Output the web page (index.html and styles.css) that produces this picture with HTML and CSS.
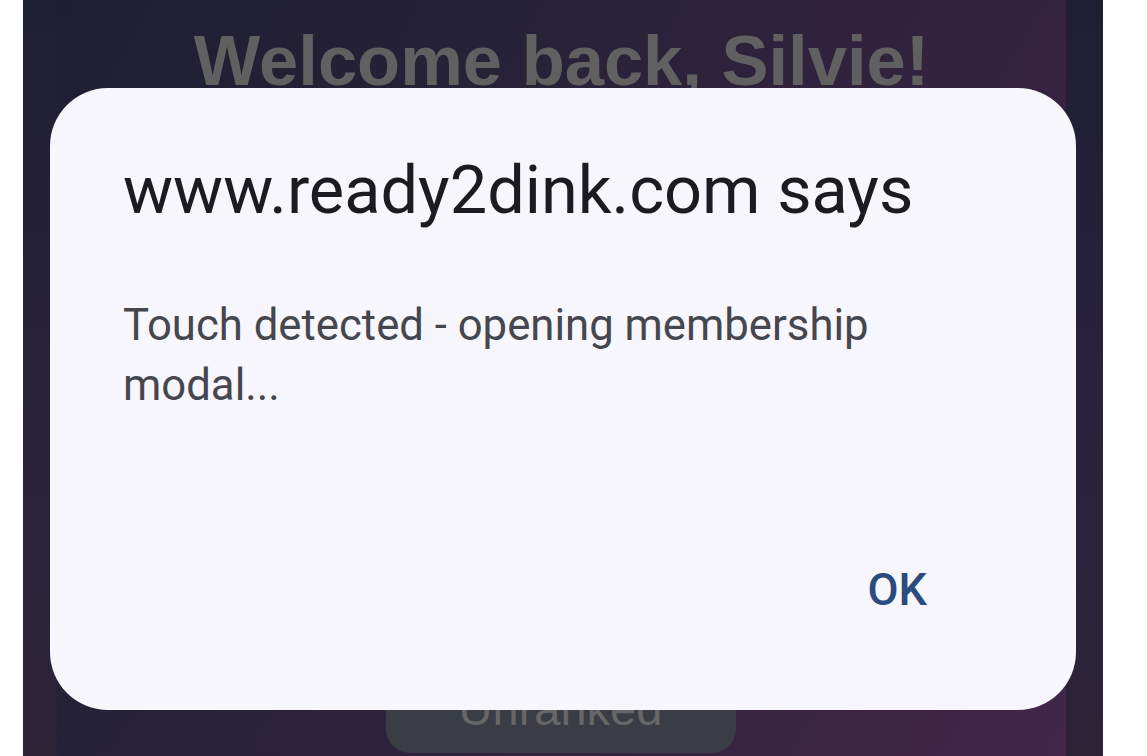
FILE: index.html
```html
<!DOCTYPE html>
<html lang="en">
<head>
<meta charset="utf-8">
<title>ready2dink</title>
<link rel="stylesheet" href="styles.css">
</head>
<body>
<div class="frame">
  <main class="page">
    <h1 class="welcome">Welcome back, Silvie!</h1>
    <div class="spacer"></div>
    <button class="rank-btn" type="button">Unranked</button>
  </main>
  <div class="dialog" role="alertdialog">
    <h2 class="dialog-title">www.ready2dink.com says</h2>
    <p class="dialog-msg">Touch detected - opening membership modal...</p>
    <div class="dialog-actions">
      <button class="ok-btn" type="button">OK</button>
    </div>
  </div>
</div>
</body>
</html>
```
FILE: styles.css
```css
html, body {
  margin: 0;
  padding: 0;
  background: #ffffff;
  height: 756px;
  overflow: hidden;
}

.frame {
  position: relative;
  margin-left: 23px;
  width: 1080px;
  height: 756px;
  box-sizing: border-box;
  padding: 0 37px 0 34px;
  background: linear-gradient(180deg, #1f1f33 0%, #28223a 50%, #2c2337 100%);
}

.page {
  height: 756px;
  display: flex;
  flex-direction: column;
  align-items: center;
  background: linear-gradient(120deg, #1e1e32 0%, #272238 35%, #352340 70%, #43264a 100%);
}

.welcome {
  margin: 21px 0 0 0;
  font-family: "Liberation Sans", Arial, sans-serif;
  font-weight: 700;
  font-size: 70.5px;
  line-height: 80px;
  color: #606060;
  white-space: nowrap;
}

.spacer {
  flex: 1;
}

.rank-btn {
  margin: 0 0 3px -2px;
  width: 350px;
  height: 64px;
  border: none;
  border-radius: 24px;
  background: #3a3d44;
  color: #676767;
  font-family: "Liberation Sans", Arial, sans-serif;
  font-size: 47px;
  line-height: 40px;
  padding: 0 0 24px 0;
  box-sizing: border-box;
}

.dialog {
  position: absolute;
  left: 27px;
  top: 88px;
  width: 1026px;
  height: 622px;
  box-sizing: border-box;
  padding: 62px 73px 90px 73px;
  border-radius: 58px;
  background: #f7f6fc;
  display: flex;
  flex-direction: column;
  font-family: Roboto, "Noto Sans", sans-serif;
}

.dialog-title {
  margin: 0;
  font-weight: 400;
  font-size: 66.7px;
  line-height: 80px;
  color: #1c1b20;
  white-space: nowrap;
}

.dialog-msg {
  margin: 65px 0 0 0;
  font-size: 43.7px;
  line-height: 60px;
  color: #45464e;
}

.dialog-actions {
  margin-top: auto;
  display: flex;
  justify-content: flex-end;
  padding-right: 76px;
}

.ok-btn {
  border: none;
  background: transparent;
  padding: 0;
  font-family: Roboto, "Noto Sans", sans-serif;
  font-weight: 500;
  font-size: 45px;
  line-height: 60px;
  color: #2b4a7e;
}
```
